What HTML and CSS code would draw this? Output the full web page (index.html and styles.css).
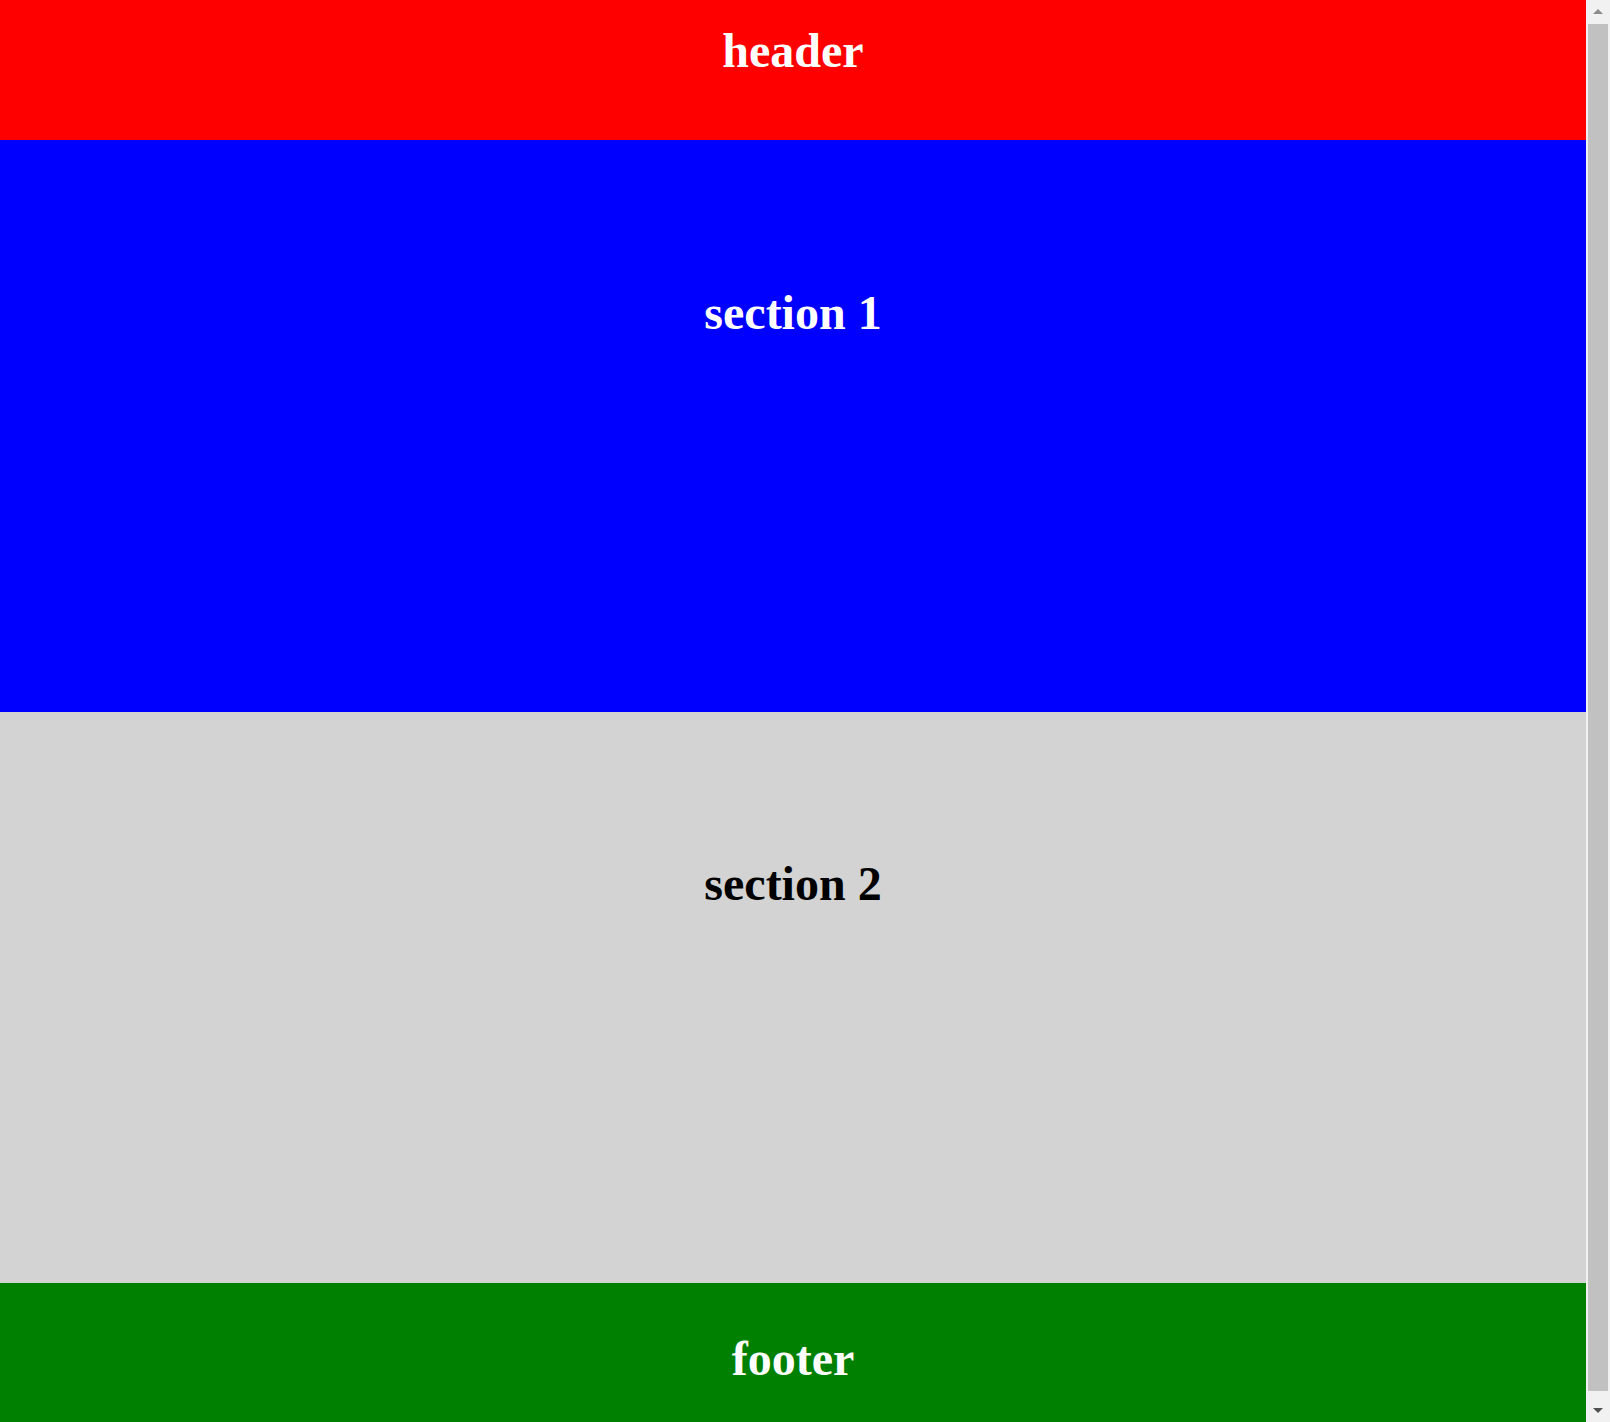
FILE: index.html
```html
<!DOCTYPE html>
<html lang="en">
<head>
<meta charset="utf-8">
<title>Layout</title>
<link rel="stylesheet" href="styles.css">
</head>
<body>
<main class="page">
  <header class="block block--header"><h1 class="block__title">header</h1></header>
  <section class="block block--s1"><h1 class="block__title">section 1</h1></section>
  <section class="block block--s2"><h1 class="block__title">section 2</h1></section>
  <footer class="block block--footer"><h1 class="block__title">footer</h1></footer>
</main>
<div class="scrollbar" aria-hidden="true">
  <div class="scrollbar__btn"><span class="scrollbar__arrow scrollbar__arrow--up"></span></div>
  <div class="scrollbar__track"><div class="scrollbar__thumb"></div></div>
  <div class="scrollbar__btn"><span class="scrollbar__arrow scrollbar__arrow--down"></span></div>
</div>
</body>
</html>
```

FILE: styles.css
```css
html, body {
  margin: 0;
  padding: 0;
}

body {
  font-family: "Liberation Serif", "Times New Roman", serif;
  background: #ffffff;
}

.page {
  margin-right: 24px;
}

.block {
  box-sizing: border-box;
  text-align: center;
}

.block__title {
  margin: 0;
  font-size: 48px;
  line-height: 48px;
  font-weight: bold;
}

.block--header {
  background: #ff0000;
  color: #fff;
  height: 140px;
  padding-top: 27px;
}

.block--s1 {
  background: #0000ff;
  color: #fff;
  height: 572px;
  padding-top: 149px;
}

.block--s2 {
  background: #d3d3d3;
  color: #000;
  height: 571px;
  padding-top: 148px;
}

.block--footer {
  background: #008000;
  color: #fff;
  height: 142px;
  padding-top: 52px;
}

/* imitation of the browser's vertical scrollbar, drawn over the right edge */
.scrollbar {
  position: fixed;
  top: 0;
  right: 0;
  width: 24px;
  height: 100vh;
  background: #f1f1f1;
  display: flex;
  flex-direction: column;
  box-sizing: border-box;
}

.scrollbar__btn {
  height: 23px;
  flex: 0 0 23px;
  display: flex;
  align-items: center;
  justify-content: center;
}

.scrollbar__arrow {
  width: 0;
  height: 0;
  border-left: 5px solid transparent;
  border-right: 5px solid transparent;
}

.scrollbar__arrow--up {
  border-bottom: 5px solid #8c8c8c;
}

.scrollbar__arrow--down {
  border-top: 5px solid #505050;
}

.scrollbar__track {
  flex: 1;
  display: flex;
  flex-direction: column;
  padding: 1px 2px 8px 2px;
}

.scrollbar__thumb {
  flex: 1;
  background: #c1c1c1;
}
```
